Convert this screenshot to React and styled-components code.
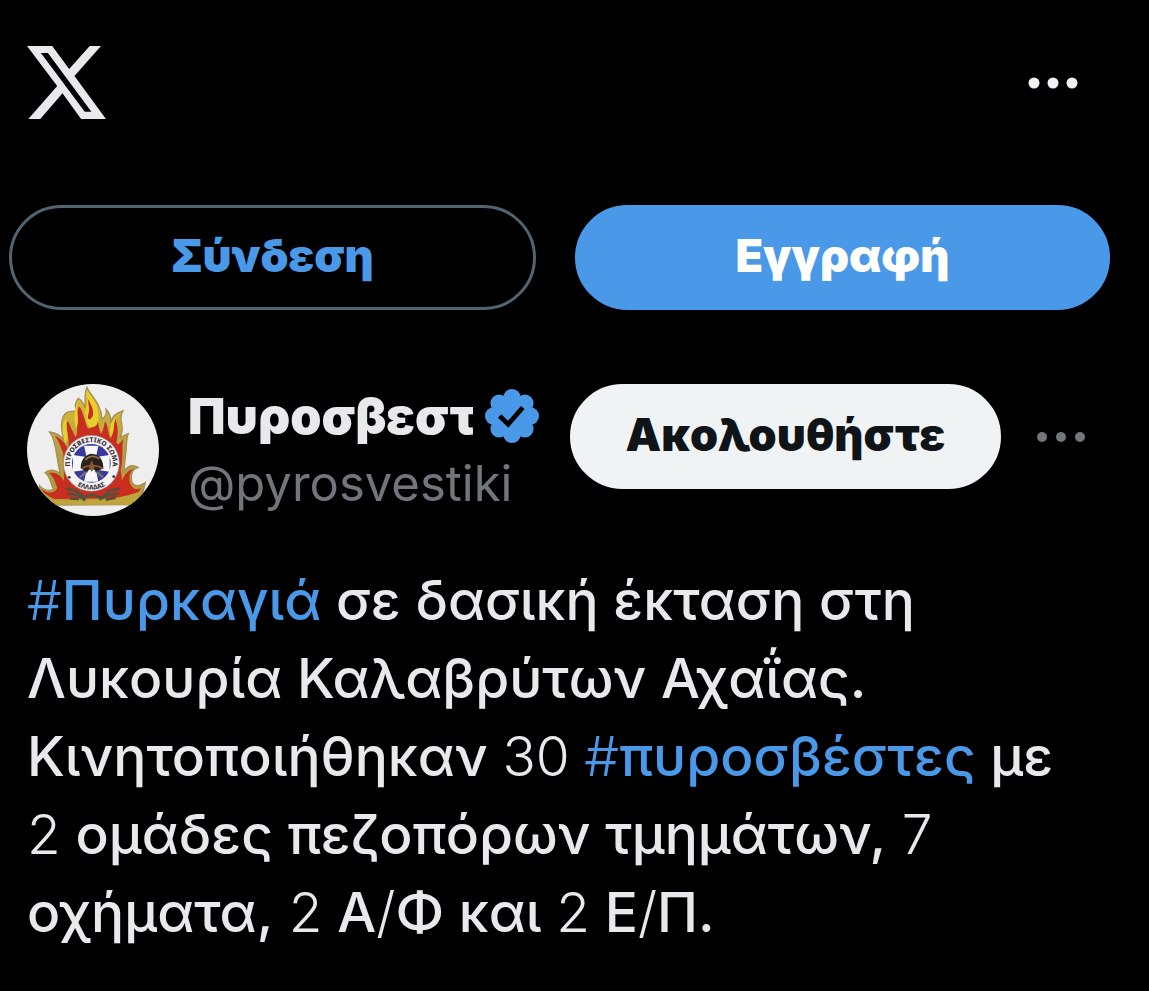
import React from 'react';
import styled, { createGlobalStyle } from 'styled-components';

const GlobalStyle = createGlobalStyle`
  * {
    box-sizing: border-box;
  }

  body {
    margin: 0;
    background: #000;
    color: #e7e9ea;
    font-family: Inter, 'Noto Sans', sans-serif;
  }
`;

const XLogo = () => (
  <svg width="79" height="73" viewBox="80 48 238 219" preserveAspectRatio="none" aria-hidden="true">
    <path
      fill="#e7e9ea"
      fillRule="evenodd"
      d="M80 48H156L207 117L269 48H303L223 138L318 267H243L187 190L120 267H84L171 168ZM122 69L254 245H274L143 69Z"
    />
  </svg>
);

const Dots = ({ radius }) => (
  <svg width="52" height="12" viewBox="0 0 52 12" fill="currentColor" aria-hidden="true">
    <circle cx="7" cy="6" r={radius} />
    <circle cx="26" cy="6" r={radius} />
    <circle cx="45" cy="6" r={radius} />
  </svg>
);

const VerifiedBadge = () => (
  <svg width="54" height="54" viewBox="1.5 1.5 21 21" role="img" aria-label="Verified">
    <g fill="#4a99e9">
      <circle cx="12" cy="12" r="8.4" />
      <circle cx="12" cy="4.9" r="3.4" />
      <circle cx="12" cy="19.1" r="3.4" />
      <circle cx="4.9" cy="12" r="3.4" />
      <circle cx="19.1" cy="12" r="3.4" />
      <circle cx="7" cy="7" r="3.4" />
      <circle cx="17" cy="7" r="3.4" />
      <circle cx="7" cy="17" r="3.4" />
      <circle cx="17" cy="17" r="3.4" />
    </g>
    <path d="M7.2 12L10.5 15.2L16.2 8.7" fill="none" stroke="#000" strokeWidth="1.9" />
  </svg>
);

const FireServiceEmblem = () => (
  <svg width="132" height="132" viewBox="36 27 396 396" role="img" aria-label="Πυροσβεστικό Σώμα">
    <defs>
      <path id="ringTop" d="M176 301A64 64 0 1 1 282 301" />
      <path id="ringBottom" d="M179 326A79 79 0 0 0 279 326" />
      <linearGradient id="gold" x1="0" y1="0" x2="0" y2="1">
        <stop offset="0" stopColor="#e0c22c" />
        <stop offset="0.5" stopColor="#b5a045" />
        <stop offset="1" stopColor="#b39a35" />
      </linearGradient>
    </defs>
    <rect x="36" y="27" width="396" height="396" fill="#eeeeef" />
    {/* flames */}
    <path
      fill="url(#gold)"
      stroke="#a5905a"
      strokeWidth="4"
      d="M110 390C85 372 72 352 74 332C84 345 98 350 116 343C106 330 108 304 90 293C104 281 126 285 137 297C124 262 126 196 104 171C122 173 137 181 147 196C138 165 136 130 153 114C163 107 173 111 185 107C178 94 181 81 190 70C199 76 207 85 210 99C212 72 207 54 216 37C222 56 260 86 261 132C272 125 276 115 273 103C284 114 288 126 287 143C291 126 304 113 324 108C313 125 319 139 321 154C324 166 319 179 315 189C322 183 330 179 340 176C332 194 336 216 332 236C330 256 328 272 327 289C337 274 351 267 369 277C352 282 346 299 350 319C358 338 374 334 391 323C386 342 386 363 354 389Z"
    />
    <path
      fill="#c92d20"
      d="M119 372C96 362 84 353 80 342C99 360 122 353 127 338C119 321 117 305 102 294C119 291 135 298 147 318L145 236C138 219 133 200 120 183C137 188 151 206 159 221C167 196 149 155 158 137C170 160 174 173 183 187C193 153 179 123 192 94C204 107 207 131 217 158C230 168 239 145 238 114C250 132 249 154 258 177C267 164 267 150 270 139C282 157 277 174 287 191C299 173 293 144 301 132C308 151 312 173 304 202C310 216 318 199 325 192C319 221 326 251 317 284L321 317C329 298 340 285 355 281C340 297 340 316 350 334C359 346 370 342 378 340C366 364 343 373 327 370Z"
    />
    <path
      fill="#e8d02c"
      d="M215 43C225 67 251 83 250 121C252 153 239 158 226 157C211 147 217 128 209 112C221 96 214 72 215 43ZM157 132C145 151 169 189 151 205C137 165 143 131 157 132ZM190 80C179 104 198 133 183 161C174 129 179 92 190 80ZM310 120C290 135 303 167 288 184C278 163 291 133 310 120Z"
    />
    <path fill="#c92d20" d="M218 68C224 86 236 96 234 118C232 130 225 136 220 132C216 124 224 111 222 98Z" />
    <path d="M92 372C150 380 310 382 381 346L354 389H110Z" fill="#c0a53b" />
    {/* laurel under the ring */}
    <path
      d="M153 340L179 346L207 367L231 359L260 369L285 347L314 341M158 357L186 360L211 376M253 374L278 360L309 356M165 370L192 372M272 374L302 368"
      fill="none"
      stroke="#55503b"
      strokeWidth="8"
    />
    <circle cx="229" cy="265" r="84" fill="#f4f3f2" stroke="#8d8580" strokeWidth="2" />
    <circle cx="229" cy="265" r="58" fill="#383a9b" />
    <path
      d="M207 212H250L243 246L284 240V290L243 284L250 320H207L215 284L174 290V240L215 246Z"
      fill="#f7f7fa"
    />
    <path d="M195 307L218 287M264 307L241 287" stroke="#73706d" strokeWidth="7" />
    <path d="M197 280C197 257 208 239 230 236C253 237 266 255 265 280L245 290L230 279L214 290Z" fill="#28221e" />
    <path d="M211 255C220 242 241 240 253 252" fill="none" stroke="#96703f" strokeWidth="5" />
    <path d="M201 280C218 270 241 268 265 281" fill="none" stroke="#a05c32" strokeWidth="4" />
    <path d="M222 278L230 256L239 278L230 290Z" fill="#8a5c31" />
    <circle cx="163" cy="307" r="4" fill="#35313d" />
    <circle cx="296" cy="305" r="4" fill="#35313d" />
    <EmblemText fontSize="20">
      <textPath href="#ringTop" startOffset="50%">ΠΥΡΟΣΒΕΣΤΙΚΟ ΣΩΜΑ</textPath>
    </EmblemText>
    <EmblemText fontSize="19">
      <textPath href="#ringBottom" startOffset="50%">ΕΛΛΑΔΑΣ</textPath>
    </EmblemText>
  </svg>
);

const App = () => {
  return (
    <Page>
      <GlobalStyle />
      <Header>
        <HomeLink href="#home" aria-label="X">
          <XLogo />
        </HomeLink>
        <IconButton type="button" aria-label="Περισσότερα">
          <Dots radius={5.5} />
        </IconButton>
      </Header>

      <AuthBar>
        <PillButton type="button" $variant="outline">Σύνδεση</PillButton>
        <PillButton type="button" $variant="primary">Εγγραφή</PillButton>
      </AuthBar>

      <Post>
        <Author>
          <Avatar href="#pyrosvestiki">
            <FireServiceEmblem />
          </Avatar>
          <Identity>
            <NameRow>
              <Name>Πυροσβεστικό</Name>
              <VerifiedBadge />
            </NameRow>
            <Handle href="#pyrosvestiki">@pyrosvestiki</Handle>
          </Identity>
          <PillButton type="button" $variant="light">Ακολουθήστε</PillButton>
          <IconButton type="button" aria-label="Επιλογές" $muted>
            <Dots radius={5} />
          </IconButton>
        </Author>

        <PostText>
          <Hashtag href="#fire"><Thin>#</Thin>Πυρκαγιά</Hashtag> σε δασική έκταση στη
          <br />
          Λυκουρία Καλαβρύτων Αχαΐας.
          <br />
          Κινητοποιήθηκαν <Thin>30</Thin> <Hashtag href="#firefighters"><Thin>#</Thin>πυροσβέστες</Hashtag> με
          <br />
          <Thin>2</Thin> ομάδες πεζοπόρων τμημάτων,<Thin> 7</Thin>
          <br />
          οχήματα,<Thin> 2</Thin> Α<Thin>/</Thin>Φ και <Thin>2</Thin> Ε<Thin>/</Thin>Π.
        </PostText>
      </Post>
    </Page>
  );
};

const Page = styled.main`
  min-height: 100vh;
  background: #000;
`;

const Header = styled.header`
  display: flex;
  justify-content: space-between;
  align-items: center;
  padding: 46px 70px 0 27px;
`;

const HomeLink = styled.a`
  display: flex;
`;

const IconButton = styled.button`
  display: flex;
  flex: none;
  padding: 0;
  border: 0;
  background: none;
  color: ${({ $muted }) => ($muted ? '#71767b' : '#eff3f4')};
  cursor: pointer;
`;

const AuthBar = styled.nav`
  display: grid;
  grid-template-columns: 527fr 535fr;
  gap: 39px;
  padding: 86px 39px 0 9px;
`;

const variants = {
  outline: { background: 'transparent', border: '#536471', color: '#4a99e9' },
  primary: { background: '#4a99e9', border: '#4a99e9', color: '#fff' },
  light: { background: '#eff3f4', border: '#eff3f4', color: '#0f1419' },
};

const PillButton = styled.button`
  height: 105px;
  padding: 0 24px 4px;
  border: 3px solid ${({ $variant }) => variants[$variant].border};
  border-radius: 53px;
  background: ${({ $variant }) => variants[$variant].background};
  color: ${({ $variant }) => variants[$variant].color};
  font-family: inherit;
  font-size: 45px;
  font-weight: 900;
  line-height: 56px;
  cursor: pointer;
`;

const Post = styled.article`
  padding: 74px 62px 0 27px;
`;

const Author = styled.div`
  display: flex;
  align-items: flex-start;

  ${PillButton} {
    flex: 0 0 431px;
    margin-left: 31px;
  }

  ${IconButton} {
    margin: 47px 0 0 34px;
  }
`;

const Avatar = styled.a`
  display: flex;
  flex: none;
  border-radius: 50%;
  overflow: hidden;
`;

const EmblemText = styled.text`
  fill: #37323a;
  font-family: 'Noto Sans', sans-serif;
  font-weight: 800;
  text-anchor: middle;
`;

const Identity = styled.div`
  flex: 1;
  min-width: 0;
  margin-left: 29px;
`;

const NameRow = styled.div`
  display: flex;
  align-items: center;
  gap: 12px;
  height: 64px;

  svg {
    flex: none;
  }
`;

const Name = styled.span`
  flex: 1;
  min-width: 0;
  overflow: hidden;
  font-size: 50px;
  font-weight: 900;
  line-height: 64px;
  white-space: nowrap;
`;

const Handle = styled.a`
  display: block;
  color: #71767b;
  font-size: 49px;
  line-height: 72px;
  text-decoration: none;
`;

const PostText = styled.p`
  margin: 41px 0 0;
  font-size: 55px;
  font-weight: 500;
  line-height: 78px;
  white-space: nowrap;
`;

const Thin = styled.span`
  font-weight: 300;
`;

const Hashtag = styled.a`
  color: #4a99e9;
  text-decoration: none;
`;

export default App;
